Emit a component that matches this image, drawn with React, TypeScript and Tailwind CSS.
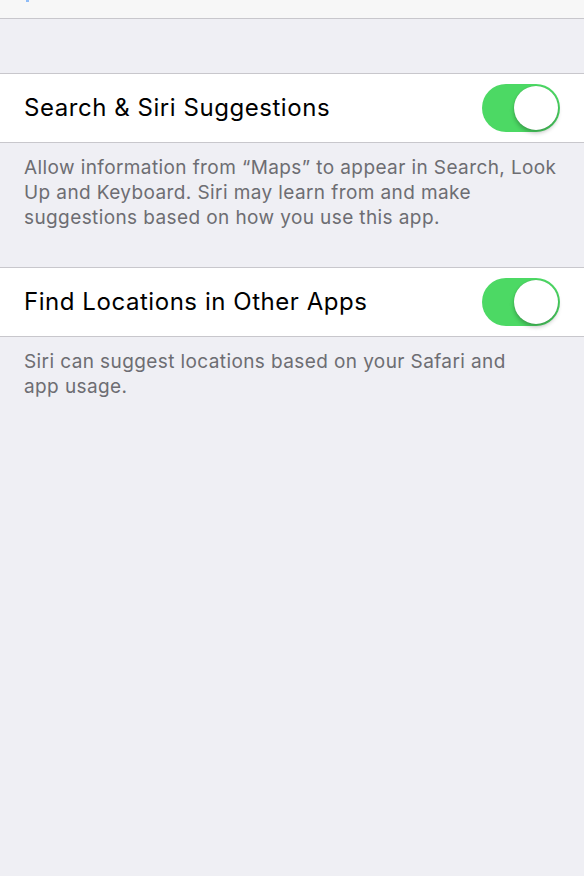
import React from 'react';

const font = { fontFamily: 'Inter, "Noto Sans", sans-serif' };

const Toggle: React.FC = () => (
  <div className="relative h-[48px] w-[78px] shrink-0 rounded-full bg-[#4cd964]">
    <div className="absolute right-[2px] top-[2px] h-[44px] w-[44px] rounded-full bg-white shadow-[0_3px_4px_rgba(0,0,0,0.25),0_0_1px_rgba(0,0,0,0.2)]" />
  </div>
);

const SwitchRow: React.FC<{ label: string }> = ({ label }) => (
  <div className="flex h-[70px] items-center justify-between border-y border-[#c8c7cc] bg-white pl-[24px] pr-[24px]">
    <span className="text-[24px] tracking-[0.55px] text-black">{label}</span>
    <Toggle />
  </div>
);

const Footer: React.FC<{ children: React.ReactNode }> = ({ children }) => (
  <p className="px-[24px] pt-[12px] text-[19px] leading-[25px] tracking-[0.4px] text-[#6d6d72]">{children}</p>
);

export default function App() {
  return (
    <div className="min-h-[876px] w-full bg-[#efeff4]" style={font}>
      {/* nav bar remnant */}
      <div className="relative h-[19px] border-b border-[#c8c7cc] bg-[#f7f7f7]">
        <div className="absolute left-[26px] top-0 h-[2px] w-[3px] bg-[#8fbcf7]" />
      </div>

      <div className="h-[54px]" />
      <SwitchRow label="Search & Siri Suggestions" />
      <Footer>
        Allow information from “Maps” to appear in Search, Look Up and Keyboard. Siri may learn from and make
        suggestions based on how you use this app.
      </Footer>

      <div className="h-[37px]" />
      <SwitchRow label="Find Locations in Other Apps" />
      <Footer>
        Siri can suggest locations based on your Safari and
        <br />
        app usage.
      </Footer>
    </div>
  );
}
